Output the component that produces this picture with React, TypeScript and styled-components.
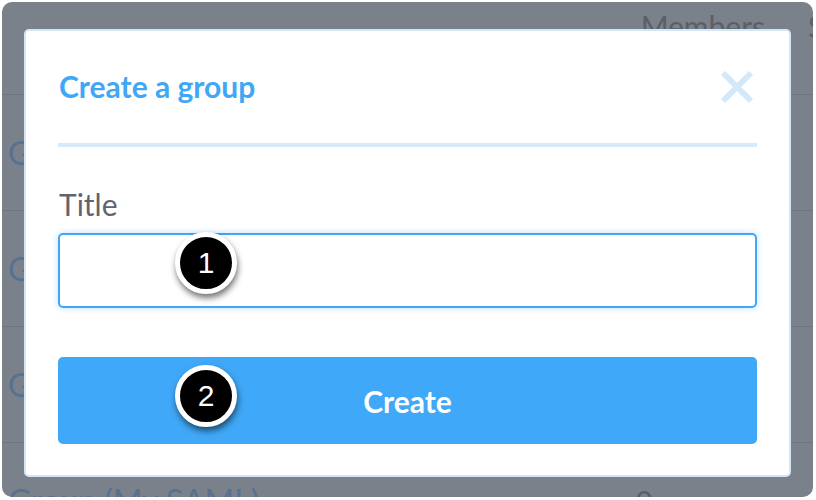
import React from 'react';
import styled, { createGlobalStyle } from 'styled-components';

const GlobalStyle = createGlobalStyle`
    html, body {
        margin: 0;
        padding: 0;
        background: #ffffff;
    }
    body {
        font-family: Lato, "Open Sans", sans-serif;
    }
`;

const Window = styled.div`
    position: relative;
    margin: 2px 0 0 2px;
    width: 811px;
    height: 495px;
    border-radius: 10px;
    background: #7b818b;
    overflow: hidden;
`;

const HeaderRow = styled.div`
    display: grid;
    grid-template-columns: 1fr auto 90px;
    column-gap: 43px;
    width: 896px;
    height: 93px;
    border-bottom: 1px solid #6f7580;
    box-sizing: border-box;
`;

const HeaderCell = styled.span`
    font-size: 30px;
    color: #5a5f68;
    line-height: 1;
    padding-top: 9px;
    white-space: nowrap;
`;

const Row = styled.div`
    display: flex;
    justify-content: space-between;
    align-items: center;
    height: 116px;
    padding: 0 0 0 6px;
    border-bottom: 1px solid #6f7580;
    box-sizing: border-box;
`;

const RowTitle = styled.span`
    font-size: 32px;
    color: #587190;
    white-space: nowrap;
`;

const RowCount = styled.span`
    font-size: 30px;
    color: #5a5f68;
    margin-right: 160px;
`;

const Modal = styled.div`
    position: absolute;
    left: 22px;
    top: 27px;
    width: 767px;
    height: 448px;
    box-sizing: border-box;
    background: #ffffff;
    border: 2px solid #d4e6f6;
    border-radius: 5px;
    padding: 0 32px;
    display: flex;
    flex-direction: column;
`;

const ModalHeader = styled.div`
    display: flex;
    justify-content: space-between;
    align-items: center;
    height: 116px;
    border-bottom: 4px solid #d6eafa;
    box-sizing: border-box;
`;

const ModalTitle = styled.h2`
    margin: 0 0 2px 1px;
    font-size: 30px;
    font-weight: 700;
    color: #40a7f6;
`;

const CloseButton = styled.button`
    border: none;
    background: none;
    padding: 0;
    margin-right: 3px;
    display: flex;
    cursor: pointer;
`;

const Label = styled.label`
    margin: 42px 0 0 1px;
    font-size: 30px;
    color: #5f6470;
    line-height: 1;
`;

const InputWrap = styled.div`
    position: relative;
    margin-top: 14px;
`;

const Input = styled.input`
    display: block;
    width: 100%;
    height: 75px;
    box-sizing: border-box;
    border: 2px solid #42a5f5;
    border-radius: 5px;
    box-shadow: 0 0 6px rgba(66, 165, 245, 0.35);
    outline: none;
`;

const SubmitWrap = styled.div`
    position: relative;
    margin-top: 49px;
`;

const Submit = styled.button`
    display: block;
    width: 100%;
    height: 87px;
    border: none;
    border-radius: 5px;
    background: #40a8f8;
    color: #ffffff;
    font-family: Lato, "Open Sans", sans-serif;
    font-size: 30px;
    font-weight: 700;
    cursor: pointer;
`;

const Step = styled.span<{ $left: number; $top: number }>`
    position: absolute;
    left: ${(p) => p.$left}px;
    top: ${(p) => p.$top}px;
    width: 52px;
    height: 52px;
    border-radius: 50%;
    background: #000000;
    border: 5px solid #ffffff;
    box-shadow: 1px 4px 6px rgba(0, 0, 0, 0.55);
    color: #ffffff;
    font-family: "Liberation Sans", Arial, sans-serif;
    font-size: 30px;
    display: flex;
    align-items: center;
    justify-content: center;
`;

const rows = ['Group Alpha', 'Group Beta', 'Group Gamma'];

function App() {
    return (
        <>
            <GlobalStyle />
            <Window>
                <HeaderRow>
                    <span />
                    <HeaderCell>Members</HeaderCell>
                    <HeaderCell>Source</HeaderCell>
                </HeaderRow>
                {rows.map((r) => (
                    <Row key={r}>
                        <RowTitle>{r}</RowTitle>
                        <RowCount>1</RowCount>
                    </Row>
                ))}
                <Row>
                    <RowTitle>Group (My SAML)</RowTitle>
                    <RowCount>0</RowCount>
                </Row>
                <Modal>
                    <ModalHeader>
                        <ModalTitle>Create a group</ModalTitle>
                        <CloseButton aria-label="Close">
                            <svg width="34" height="34" viewBox="0 0 34 34">
                                <path d="M3 3 L31 31 M31 3 L3 31" stroke="#d3e8f8" strokeWidth="6" />
                            </svg>
                        </CloseButton>
                    </ModalHeader>
                    <Label>Title</Label>
                    <InputWrap>
                        <Input />
                        <Step $left={117} $top={-1}>1</Step>
                    </InputWrap>
                    <SubmitWrap>
                        <Submit>Create</Submit>
                        <Step $left={117} $top={8}>2</Step>
                    </SubmitWrap>
                </Modal>
            </Window>
        </>
    );
}

export default App;
